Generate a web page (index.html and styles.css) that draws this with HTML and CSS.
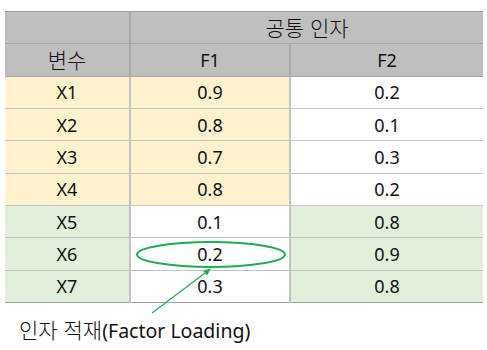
FILE: index.html
```html
<!DOCTYPE html>
<html lang="ko">
<head>
<meta charset="utf-8">
<link rel="stylesheet" href="styles.css">
</head>
<body>
<div class="wrap">
  <table class="loadings">
    <colgroup><col class="c-var"><col class="c-f1"><col class="c-f2"></colgroup>
    <thead>
      <tr><th class="hd"></th><th class="hd" colspan="2"><span class="ko">공통 인자</span></th></tr>
      <tr><th class="hd"><span class="ko">변수</span></th><th class="hd">F1</th><th class="hd">F2</th></tr>
    </thead>
    <tbody>
      <tr><td class="y">X1</td><td class="y">0.9</td><td>0.2</td></tr>
      <tr><td class="y">X2</td><td class="y">0.8</td><td>0.1</td></tr>
      <tr><td class="y">X3</td><td class="y">0.7</td><td>0.3</td></tr>
      <tr><td class="y">X4</td><td class="y">0.8</td><td>0.2</td></tr>
      <tr><td class="g">X5</td><td>0.1</td><td class="g">0.8</td></tr>
      <tr><td class="g">X6</td><td>0.2</td><td class="g">0.9</td></tr>
      <tr class="last"><td class="g">X7</td><td>0.3</td><td class="g">0.8</td></tr>
    </tbody>
  </table>
  <p class="caption"><span class="ko">인자 적재</span>(Factor Loading)</p>
  <svg class="mark" width="487" height="350" viewBox="0 0 487 350">
    <ellipse cx="211" cy="254.5" rx="74" ry="12.5" fill="none" stroke="#1ead4f" stroke-width="2"/>
    <line x1="152" y1="313" x2="205" y2="273" stroke="#1ead4f" stroke-width="1.2"/>
    <polygon points="211,268.5 203,270.5 207,275.5" fill="#1ead4f"/>
  </svg>
</div>
</body>
</html>
```
FILE: styles.css
```css
html, body {
  margin: 0;
  padding: 0;
  background: #ffffff;
}
.wrap {
  position: relative;
  width: 487px;
  height: 350px;
  padding: 11px 0 0 5px;
  box-sizing: border-box;
  font-family: "Noto Sans", "Noto Sans CJK KR", sans-serif;
  color: #111111;
}
.ko {
  font-family: "Noto Sans CJK KR", sans-serif;
  font-size: 21px;
  font-weight: 300;
}
.loadings {
  border-collapse: collapse;
  width: 478px;
  table-layout: fixed;
  font-size: 18px;
}
.c-var { width: 125px; }
.c-f1 { width: 160px; }
.c-f2 { width: 193px; }
.loadings tr { height: 32.33px; }
.loadings th, .loadings td {
  padding: 0;
  text-align: center;
  vertical-align: middle;
  font-weight: normal;
  border-top: 1px solid #c3c3c3;
  border-bottom: 1px solid #c3c3c3;
  border-left: 2px solid #c3c3c3;
  border-right: 2px solid #c3c3c3;
  line-height: 20px;
}
.loadings th .ko { line-height: 20px; }
.loadings th:first-child, .loadings td:first-child { border-left: none; }
.loadings th:last-child, .loadings td:last-child { border-right: none; }
.loadings th.hd {
  background: #bfbfbf;
  border-color: #a8a8a8;
}
.loadings thead tr:first-child th { border-top: 1px solid #a0a0a0; }
.loadings th.hd:first-child { border-left: none; }
.loadings th.hd:last-child { border-right: none; }
.loadings .y { background: #fff2cc; }
.loadings .g { background: #e2efda; }
.loadings tr.last td { border-bottom: 1px solid #a0a0a0; }
.caption {
  margin: 0;
  padding: 14px 0 0 14px;
  font-size: 19.5px;
  line-height: 24px;
}
.caption .ko { font-size: 21px; }
.mark {
  position: absolute;
  left: 0;
  top: 0;
  pointer-events: none;
}
```
